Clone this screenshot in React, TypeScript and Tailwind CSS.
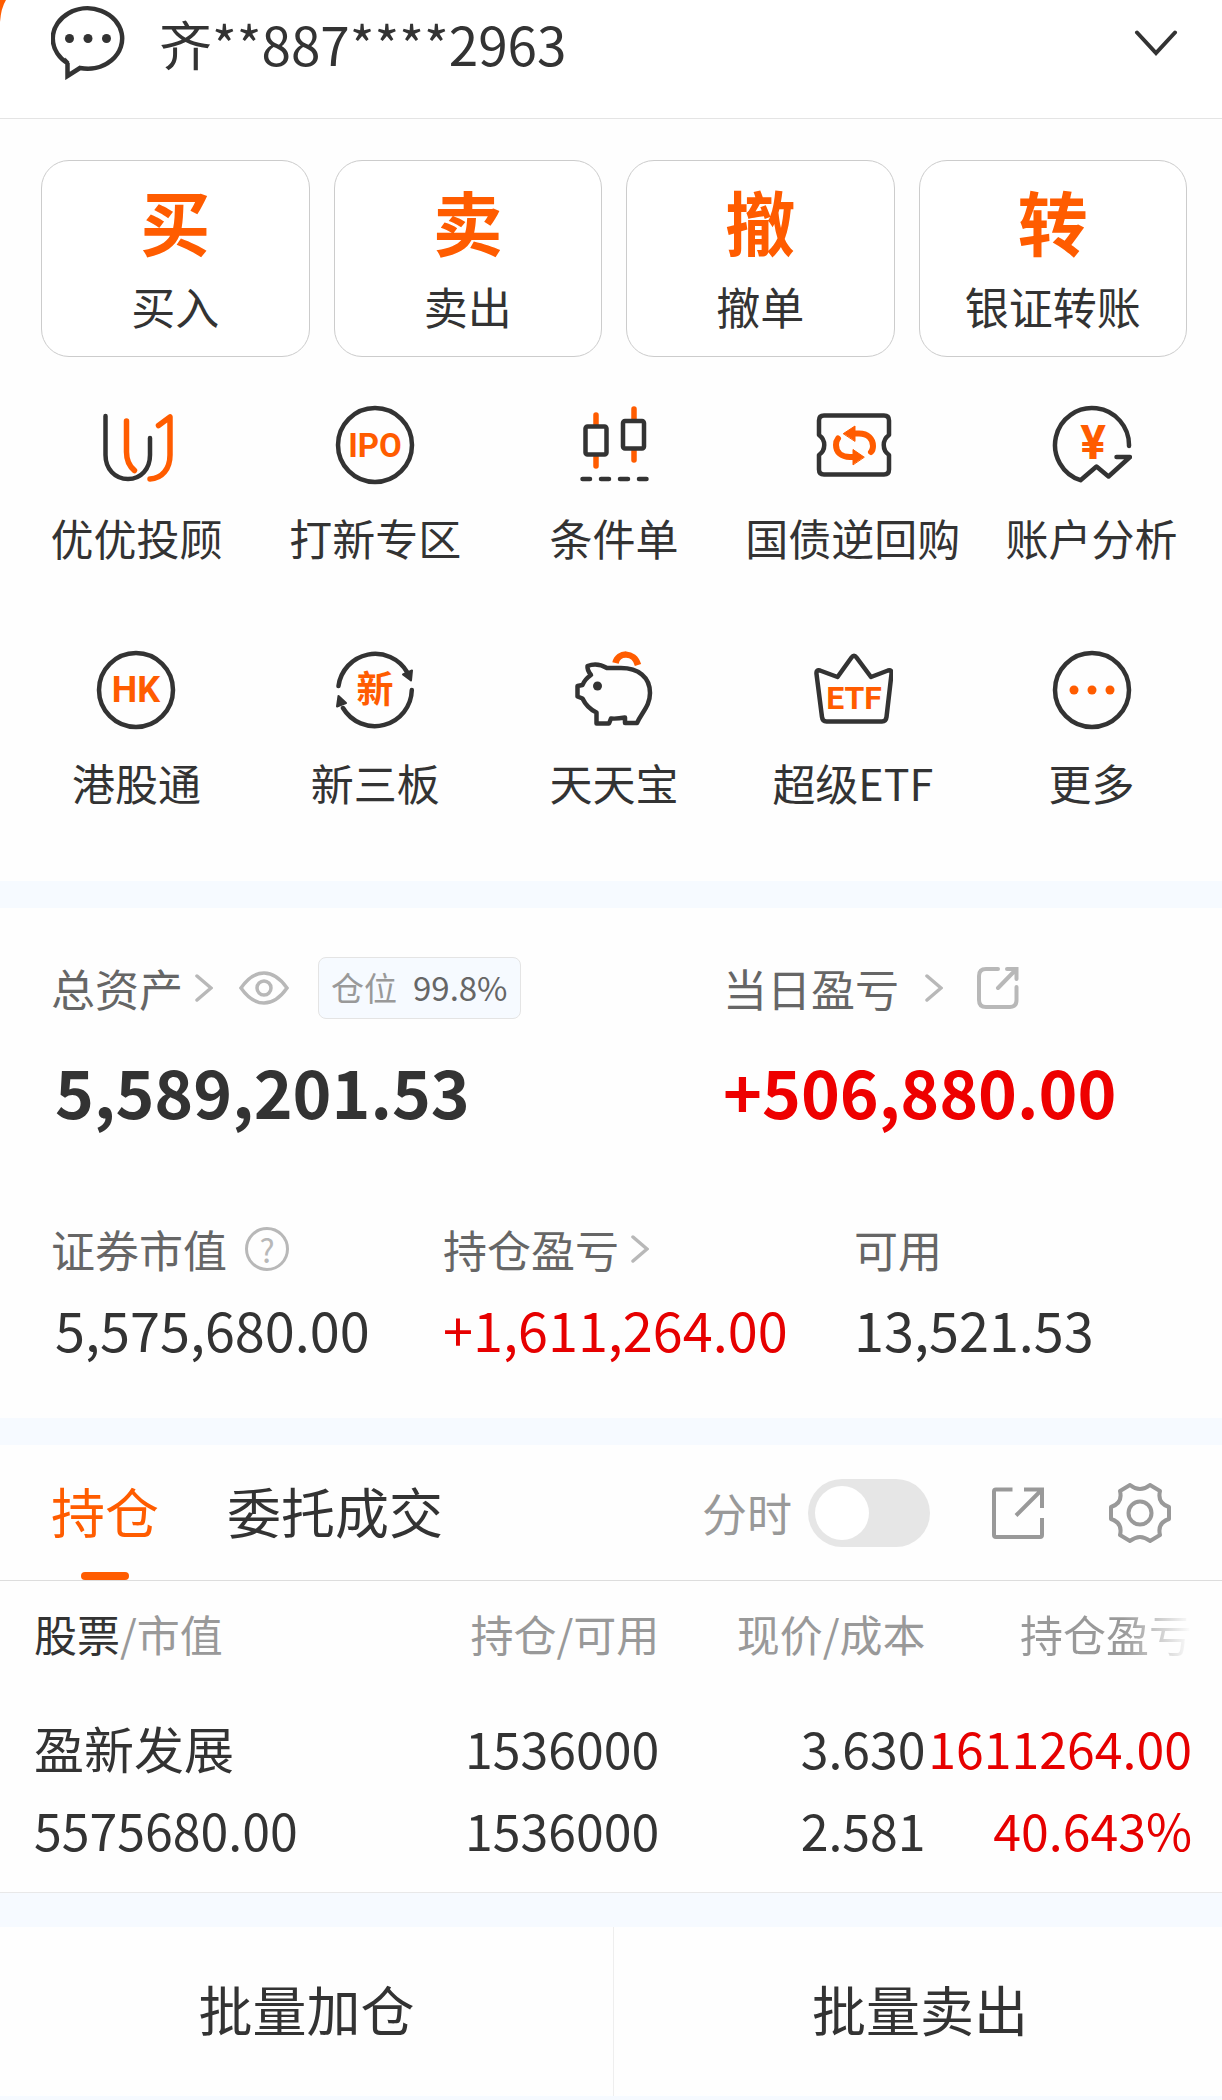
import { useState, type ReactNode } from 'react'

const DARK = '#333333'
const ORANGE = '#ff5c00'

const trades = [
  { mark: '买', label: '买入' },
  { mark: '卖', label: '卖出' },
  { mark: '撤', label: '撤单' },
  { mark: '转', label: '银证转账' },
]

const tools = [
  { label: '优优投顾', icon: <AdvisorIcon /> },
  { label: '打新专区', icon: <RingTextIcon text="IPO" size={33} /> },
  { label: '条件单', icon: <CandleIcon /> },
  { label: '国债逆回购', icon: <RepoIcon /> },
  { label: '账户分析', icon: <AnalysisIcon /> },
  { label: '港股通', icon: <RingTextIcon text="HK" size={36} /> },
  { label: '新三板', icon: <NewBoardIcon /> },
  { label: '天天宝', icon: <PiggyIcon /> },
  { label: '超级ETF', icon: <CrownIcon /> },
  { label: '更多', icon: <MoreIcon /> },
]

const holdings = [
  {
    name: '盈新发展',
    value: '5575680.00',
    amount: '1536000',
    available: '1536000',
    price: '3.630',
    cost: '2.581',
    profit: '1611264.00',
    rate: '40.643%',
  },
]

function ToolSvg({ children }: { children: ReactNode }) {
  return (
    <svg
      viewBox="0 0 80 80"
      className="size-20"
      fill="none"
      stroke={DARK}
      strokeWidth={4.5}
      strokeLinecap="round"
      strokeLinejoin="round"
      aria-hidden="true"
    >
      {children}
    </svg>
  )
}

function IconText({ x = 40, y, size, children }: { x?: number; y: number; size: number; children: string }) {
  return (
    <text
      x={x}
      y={y}
      fontSize={size}
      textAnchor="middle"
      fill={ORANGE}
      stroke="none"
      className="font-['Roboto','Noto_Sans_CJK_SC',sans-serif] font-bold"
    >
      {children}
    </text>
  )
}

function AdvisorIcon() {
  return (
    <ToolSvg>
      <path d="M9.5 11V50C9.5 64 19 74 32 74S54 64 54 50V33" />
      <g stroke={ORANGE} strokeWidth={5.5}>
        <path d="M30.5 16V47C30.5 55 33 61 38.5 65.5" />
        <path d="M62.5 20.5L74 12V50C74 64 66 73.5 54 74" />
      </g>
    </ToolSvg>
  )
}

function RingTextIcon({ text, size }: { text: string; size: number }) {
  return (
    <ToolSvg>
      <circle cx="40" cy="40" r="37" />
      <IconText y={52} size={size}>{text}</IconText>
    </ToolSvg>
  )
}

function CandleIcon() {
  return (
    <ToolSvg>
      <path d="M22 10V20M22 52V61M60 4V14M60 46V55" stroke={ORANGE} strokeWidth={5.5} />
      <rect x="11.5" y="21.5" width="21" height="28" rx="2" />
      <rect x="49" y="16" width="21" height="27.5" rx="2" />
      <path d="M8.5 74H16M27 74H35M46 74H54M65 74H72.500" />
    </ToolSvg>
  )
}

function RepoIcon() {
  return (
    <ToolSvg>
      <path d="M11 10.5H71Q76 10.5 76 15.5V30C69 35 69 45 76 50V64.5Q76 69.5 71 69.5H11Q6 69.5 6 64.5V50C13 45 13 35 6 30V15.5Q6 10.5 11 10.5Z" />
      <path d="M42 28.5H46C55 28.5 60 34 60 41Q60 45 58 47M40 52H37C28 52 23 47 23 40Q23 36 25 33.5" stroke={ORANGE} strokeWidth={6} />
      <path d="M30.5 28.5L42 21V36ZM51 52L40 44.5V59.5Z" fill={ORANGE} stroke={ORANGE} strokeWidth={1} />
    </ToolSvg>
  )
}

function AnalysisIcon() {
  return (
    <ToolSvg>
      <path d="M77 41A37 37 0 1 0 28.5 75.2L44.5 61.5L56.5 71.5L78 52H64.5" />
      <IconText x={41} y={54} size={48}>¥</IconText>
    </ToolSvg>
  )
}

function NewBoardIcon() {
  return (
    <ToolSvg>
      <path d="M3.5 36A37 37 0 0 1 72 22M76.8 40A37 37 0 0 1 8 58" />
      <path d="M76 30.5L68 24.5L77 20.5ZM3.5 46L2 56.5L11 53Z" fill={DARK} strokeWidth={2} />
      <IconText y={53} size={37}>新</IconText>
    </ToolSvg>
  )
}

function PiggyIcon() {
  return (
    <ToolSvg>
      <path d="M13.5 16Q23 12 33 18H47C64 18 76 27 76 43C76 56 68 62 63 73H51V67.5Q43 69 37 68.5L35 73.5H22.5V62.5Q13 58 8.5 48.5L3.5 46.5V36L8.5 35Q11 29 17 25Q13 20 13.5 16Z" />
      <circle cx="23.5" cy="36" r="4.5" fill={DARK} stroke="none" />
      <path d="M41.5 13C44 2 60 1 64 15" stroke={ORANGE} strokeWidth={6.5} strokeLinecap="butt" />
    </ToolSvg>
  )
}

function CrownIcon() {
  return (
    <ToolSvg>
      <path d="M7 20.5L24.5 27L38.5 7.5Q41 4 43.5 7.5L58 27L75 20.5Q79 19.5 78.5 24L73.5 67Q73 71.5 69 71.5H13.5Q9.5 71.5 9 67L3.5 24Q3 19.5 7 20.5Z" />
      <IconText x={41} y={59} size={32}>ETF</IconText>
    </ToolSvg>
  )
}

function MoreIcon() {
  return (
    <ToolSvg>
      <circle cx="40" cy="40" r="37" />
      <g fill={ORANGE} stroke="none">
        <circle cx="22" cy="40" r="4.5" />
        <circle cx="40" cy="40" r="4.5" />
        <circle cx="58" cy="40" r="4.5" />
      </g>
    </ToolSvg>
  )
}

function ChatIcon() {
  return (
    <svg viewBox="0 0 74 74" className="size-[74px]" fill="none" stroke={DARK} strokeWidth={4.5} aria-hidden="true">
      <path d="M17 57.5A34.7 30.2 0 1 1 29 62L16.5 70V57Z" />
      <g fill={DARK} stroke="none">
        <circle cx="18.5" cy="32.5" r="4.5" />
        <circle cx="37" cy="32.5" r="4.5" />
        <circle cx="55.5" cy="32.5" r="4.5" />
      </g>
    </svg>
  )
}

function ChevronRight() {
  return (
    <svg viewBox="0 0 18 28" className="h-7 w-[18px]" fill="none" stroke="#b8b8b8" strokeWidth={3.5} strokeLinecap="round" aria-hidden="true">
      <path d="M2 2L16 14L2 26" />
    </svg>
  )
}

function EyeIcon() {
  return (
    <svg viewBox="0 0 50 34" className="h-[34px] w-[50px]" fill="none" stroke="#b8b8b8" strokeWidth={3.5} aria-hidden="true">
      <path d="M2 17C9 7 16 2 25 2S41 7 48 17C41 27 34 32 25 32S9 27 2 17Z" />
      <circle cx="25" cy="17" r="7" />
    </svg>
  )
}

function ShareIcon() {
  return (
    <svg viewBox="0 0 42 42" className="size-[42px]" fill="none" stroke="#b8b8b8" strokeWidth={4} strokeLinecap="round" aria-hidden="true">
      <path d="M21 2H9Q2 2 2 9V33Q2 40 9 40H33Q39.5 40 39.5 33V20" />
      <path d="M30 2H39.5V12M39.5 2L21 21" />
    </svg>
  )
}

function ExportIcon() {
  return (
    <svg viewBox="0 0 52 52" className="size-[52px]" fill="none" stroke="#999999" strokeWidth={4} aria-hidden="true">
      <path d="M20.5 2.5H4Q2 2.5 2 4.5V48Q2 50 4 50H48Q50 50 50 48V31" />
      <path d="M32 2.5H50V21M50 2.5L24 28.5" />
    </svg>
  )
}

function GearIcon() {
  return (
    <svg viewBox="0 0 62 60" className="h-[60px] w-[62px]" fill="none" stroke="#999999" strokeWidth={4} strokeLinejoin="round" aria-hidden="true">
      <path d="M21 2Q31 10 41 2L51 8Q48 20 60 24V36Q48 40 51 52L41 58Q31 50 21 58L11 52Q14 40 2 36V24Q14 20 11 8Z" />
      <circle cx="31" cy="30" r="11.5" />
    </svg>
  )
}

function Header() {
  return (
    <header className="relative flex items-center border-b border-[#e4e4e4] bg-white pt-1.5 pr-11 pb-[38px] pl-[51px]">
      {/* brand banner peeking out behind the sheet's rounded corner */}
      <svg viewBox="0 0 6 22" className="absolute top-0 left-0 h-[22px] w-1.5" aria-hidden="true">
        <path d="M0 0H6Q1 8 0 22Z" fill={ORANGE} />
      </svg>
      <button type="button" aria-label="消息">
        <ChatIcon />
      </button>
      <button type="button" className="ml-[34px] flex flex-1 items-center justify-between">
        <span className="text-[53px] leading-[74px]">齐**887****2963</span>
        <svg viewBox="0 0 44 26" className="h-[26px] w-11" fill="none" stroke={DARK} strokeWidth={4} strokeLinecap="round" aria-hidden="true">
          <path d="M3 2.5L22 23L41 2.5" />
        </svg>
      </button>
    </header>
  )
}

function Trades() {
  return (
    <div className="grid grid-cols-4 gap-6 pt-[41px] pr-[35px] pl-[41px]">
      {trades.map(({ mark, label }) => (
        <button
          key={label}
          type="button"
          className="flex flex-col items-center rounded-[28px] border border-[#cccccc] bg-white pt-5 pb-[22px]"
        >
          <span className="text-[70px] leading-[80px] font-bold text-[#ff5c00]">{mark}</span>
          <span className="mt-[17px] text-[44px] leading-[56px]">{label}</span>
        </button>
      ))}
    </div>
  )
}

function Tools() {
  return (
    <nav className="grid grid-cols-5 gap-y-[85px] pt-12 pr-[11px] pb-[71px] pl-[17px]">
      {tools.map(({ label, icon }) => (
        <a key={label} href="#" className="flex flex-col items-center gap-6">
          {icon}
          <span className="text-[43px] leading-[56px] whitespace-nowrap">{label}</span>
        </a>
      ))}
    </nav>
  )
}

function Assets() {
  return (
    <section className="pt-12 pb-[57px] pl-[51px] text-[44px]">
      <div className="grid grid-cols-[672fr_499fr]">
        <div>
          <div className="flex h-16 items-center text-[#666666]">
            <a href="#" className="flex items-center gap-3">
              总资产
              <ChevronRight />
            </a>
            <button type="button" aria-label="隐藏金额" className="ml-[26px]">
              <EyeIcon />
            </button>
            <span className="ml-[29px] flex h-[62px] items-center gap-4 rounded-lg border border-[#e4e4e4] bg-[#f6faff] px-3 text-[33px]">
              <span className="text-[#999999]">仓位</span>
              <span>99.8%</span>
            </span>
          </div>
          <p className="mt-[30px] pl-1 text-[66px] leading-[80px] font-bold">5,589,201.53</p>
        </div>
        <div>
          <div className="flex h-16 items-center text-[#666666]">
            <a href="#" className="flex items-center gap-[26px]">
              当日盈亏
              <ChevronRight />
            </a>
            <button type="button" aria-label="分享" className="ml-[34px]">
              <ShareIcon />
            </button>
          </div>
          <p className="mt-[30px] text-[66px] leading-[80px] font-bold text-[#ee0000]">+506,880.00</p>
        </div>
      </div>

      <div className="mt-[91px] grid grid-cols-[392fr_411fr_368fr]">
        <div>
          <div className="flex h-14 items-center gap-[18px] text-[#666666]">
            证券市值
            <button
              type="button"
              aria-label="证券市值说明"
              className="flex size-11 items-center justify-center rounded-full border-3 border-[#b8b8b8] text-[32px] leading-none text-[#b8b8b8]"
            >
              ?
            </button>
          </div>
          <p className="mt-5 pl-1 text-[54px] leading-[64px]">5,575,680.00</p>
        </div>
        <div>
          <a href="#" className="flex h-14 items-center gap-3 text-[#666666]">
            持仓盈亏
            <ChevronRight />
          </a>
          <p className="mt-5 text-[54px] leading-[64px] text-[#e60000]">+1,611,264.00</p>
        </div>
        <div>
          <div className="flex h-14 items-center text-[#666666]">可用</div>
          <p className="mt-5 text-[54px] leading-[64px]">13,521.53</p>
        </div>
      </div>
    </section>
  )
}

function HoldingTabs() {
  const [minute, setMinute] = useState(false)

  return (
    <div className="flex h-[136px] items-center border-b border-[#dddddd] px-[51px]">
      <div role="tablist" className="flex h-full gap-[68px] text-[54px]">
        <button type="button" role="tab" aria-selected="true" className="relative pb-1 text-[#ff5c00]">
          持仓
          <span className="absolute bottom-0 left-1/2 h-2 w-12 -translate-x-1/2 rounded-full bg-[#ff5c00]" />
        </button>
        <button type="button" role="tab" aria-selected="false" className="pb-1">
          委托成交
        </button>
      </div>
      <label className="ml-auto flex items-center gap-4 text-[45px] text-[#999999]">
        分时
        <input
          type="checkbox"
          role="switch"
          checked={minute}
          onChange={(e) => setMinute(e.target.checked)}
          className="flex h-[68px] w-[122px] appearance-none items-center rounded-full bg-[#e6e6e6] px-[7px] before:size-[54px] before:rounded-full before:bg-white checked:justify-end checked:bg-[#ff5c00]"
        />
      </label>
      <button type="button" aria-label="导出" className="ml-[62px]">
        <ExportIcon />
      </button>
      <button type="button" aria-label="设置" className="ml-[65px]">
        <GearIcon />
      </button>
    </div>
  )
}

function HoldingTable() {
  return (
    <div className="border-b border-[#e8e8e8] pt-6 pr-[30px] pb-[22px] pl-[34px]">
      <table className="w-full table-fixed text-right whitespace-nowrap">
        <thead className="text-[43px] leading-[56px] text-[#999999]">
          <tr>
            <th className="w-[31%] text-left font-normal">
              <span className="text-[#333333]">股票</span>/市值
            </th>
            <th className="w-[23%] font-normal">持仓/可用</th>
            <th className="w-[23%] font-normal">现价/成本</th>
            <th className="w-[23%] font-normal">
              <span className="bg-linear-to-r from-[#999999] from-60% to-white bg-clip-text text-transparent">持仓盈亏</span>
            </th>
          </tr>
        </thead>
        <tbody className="text-[50px] leading-[82px]">
          {holdings.map((h) => (
            <tr key={h.name}>
              <td className="pt-[45px] text-left">
                {h.name}
                <br />
                {h.value}
              </td>
              <td className="pt-[45px]">
                {h.amount}
                <br />
                {h.available}
              </td>
              <td className="pt-[45px]">
                {h.price}
                <br />
                {h.cost}
              </td>
              <td className="pt-[45px] text-[#e60000]">
                {h.profit}
                <br />
                {h.rate}
              </td>
            </tr>
          ))}
        </tbody>
      </table>
    </div>
  )
}

export default function App() {
  return (
    <main className="min-h-screen bg-[#f6faff] font-['Noto_Sans_CJK_SC',sans-serif] text-[#333333]">
      <div className="bg-[#fefefe]">
        <Header />
        <Trades />
        <Tools />
      </div>

      <div className="mt-[27px] bg-[#fefefe]">
        <Assets />
      </div>

      <div className="mt-[27px] bg-[#fefefe]">
        <HoldingTabs />
        <HoldingTable />
      </div>

      <div className="mt-[34px] grid grid-cols-[614fr_608fr] divide-x divide-[#eeeeee] bg-[#fefefe] text-[54px] leading-[80px]">
        <button type="button" className="pt-[42px] pb-[47px]">批量加仓</button>
        <button type="button" className="pt-[42px] pb-[47px] pl-1">批量卖出</button>
      </div>
    </main>
  )
}
